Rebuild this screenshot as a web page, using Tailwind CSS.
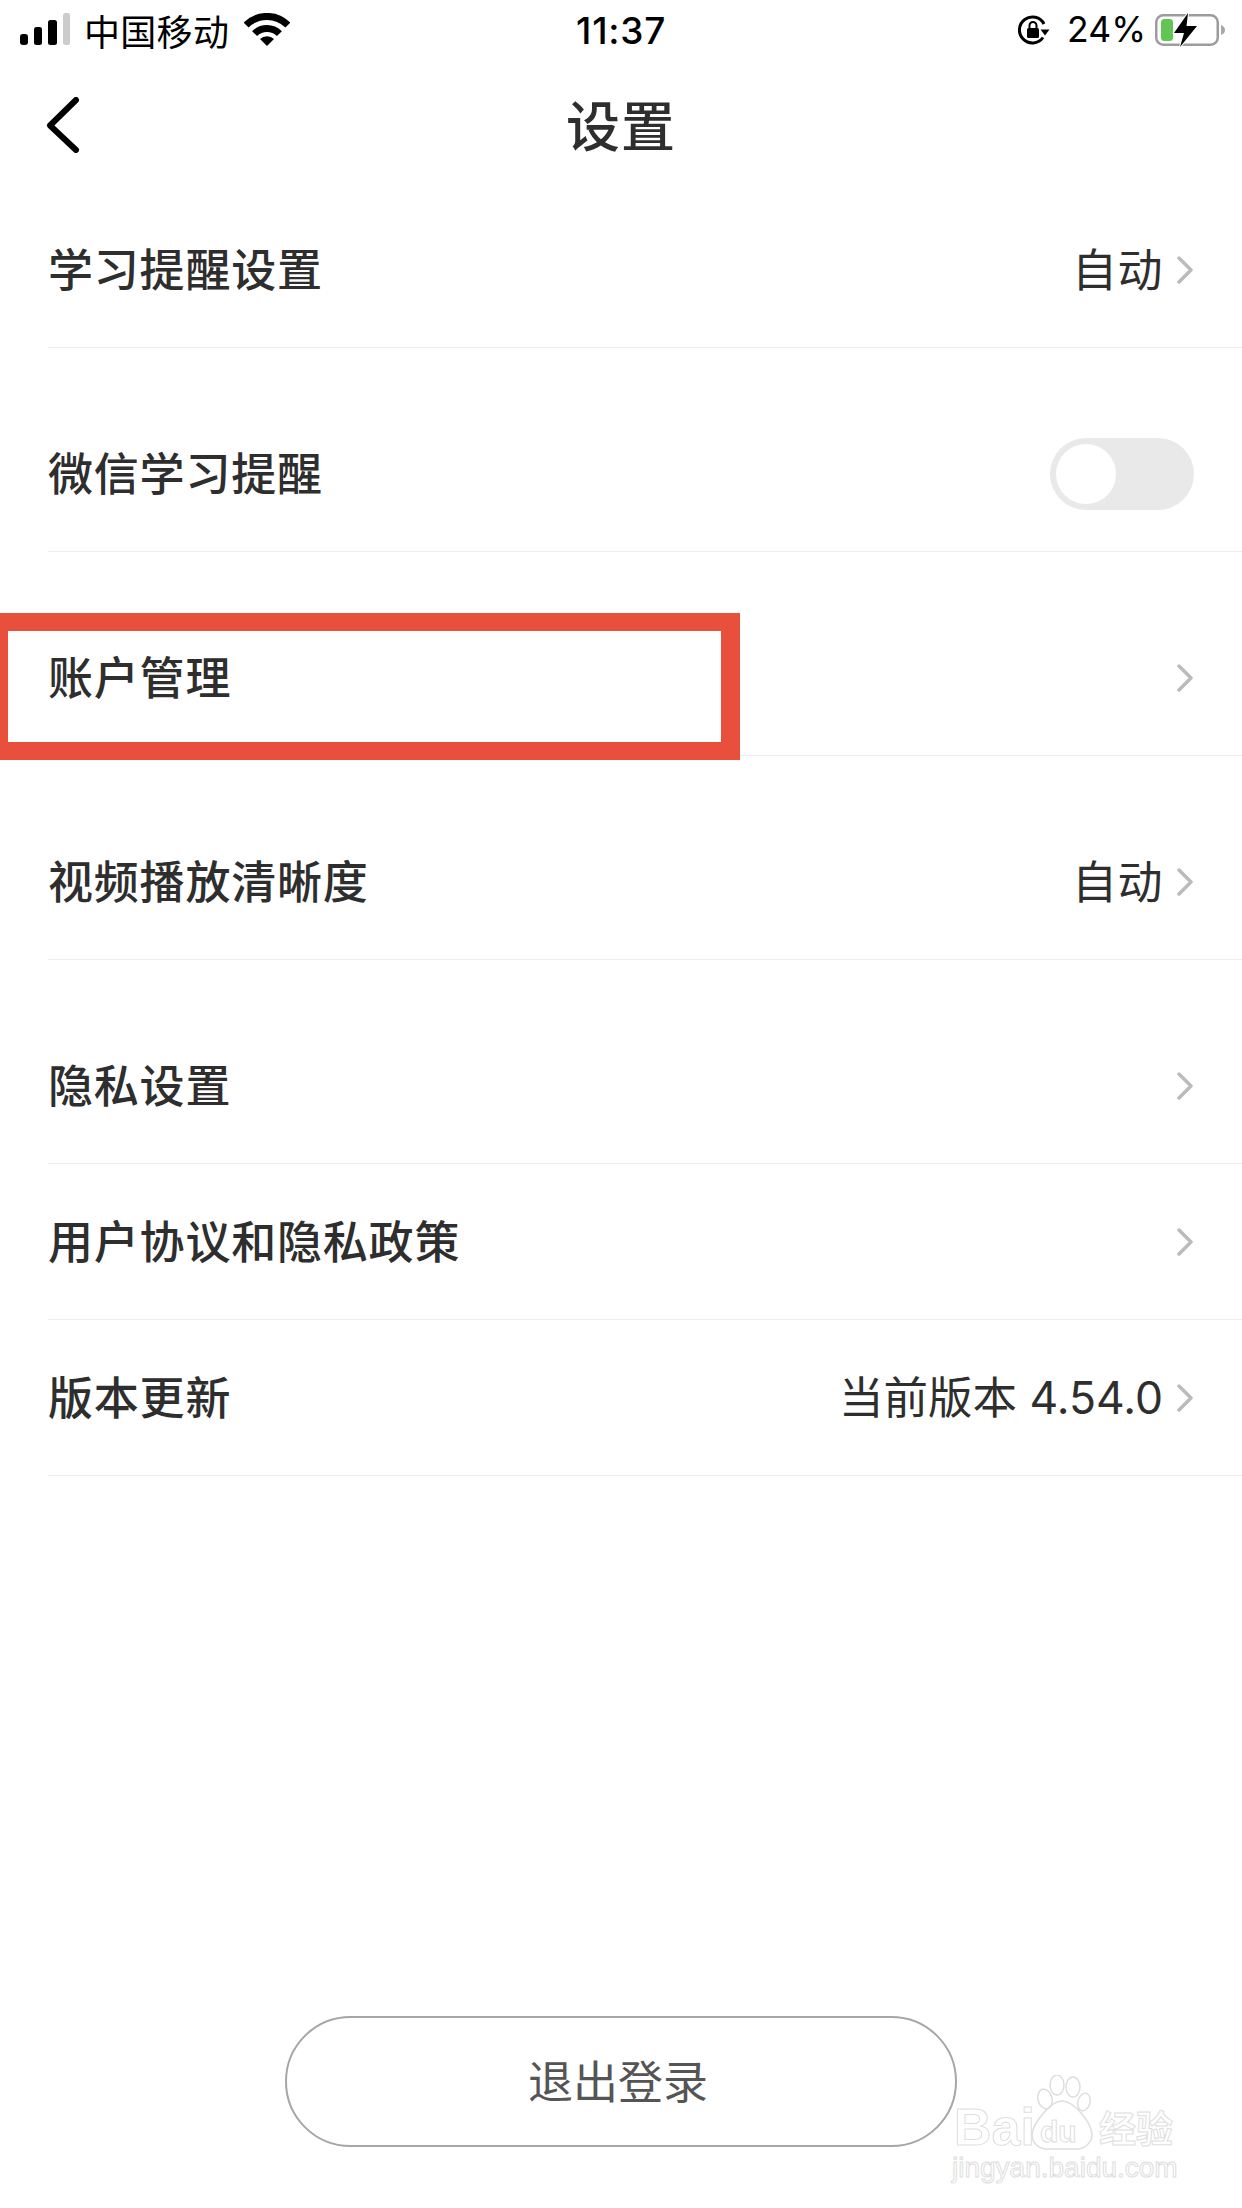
<!DOCTYPE html>
<html lang="zh-CN">
<head>
<meta charset="utf-8">
<script src="https://cdn.jsdelivr.net/npm/@tailwindcss/browser@4"></script>
</head>
<body class="bg-white">
<div class="relative w-[1242px] h-[2208px] overflow-hidden bg-white font-['Inter','Noto_Sans_CJK_SC',sans-serif] text-[#2e2e2e]">

  <!-- status bar -->
  <div class="relative h-[60px] flex items-center justify-between text-black">
    <div class="flex items-center pl-[20px]">
      <svg width="50" height="32" viewBox="0 0 50 32" class="mt-[-2px]">
        <rect x="0" y="21" width="8" height="11" rx="3" fill="#000"/>
        <rect x="14" y="14" width="8" height="18" rx="2.5" fill="#000"/>
        <rect x="28" y="7" width="9" height="25" rx="2.5" fill="#000"/>
        <rect x="43" y="0" width="7" height="32" rx="2.5" fill="#cccccc"/>
      </svg>
      <span class="ml-[14px] text-[36px] leading-[60px] tracking-[0.3px] font-['Noto_Sans_CJK_SC',sans-serif] font-normal">中国移动</span>
      <svg width="46" height="33" viewBox="0 0 46 33" class="ml-[15px] mt-[-1px]" fill="none" stroke="#000">
        <path d="M2.1 12.1A29.5 29.5 0 0 1 43.9 12.1" stroke-width="7"/>
        <path d="M10.6 20.6A17.5 17.5 0 0 1 35.4 20.6" stroke-width="7"/>
        <path d="M23 33L16 26A10 10 0 0 1 30 26Z" fill="#000" stroke="none"/>
      </svg>
    </div>
    <span class="absolute left-[576px] top-[11px] text-[37px] leading-[40px] font-medium tracking-[0.8px]">11:37</span>
    <div class="flex items-center pr-[16px]">
      <svg width="32" height="30" viewBox="0 0 32 30" fill="none">
        <path d="M25 22.5A13 13 0 1 1 26 9" stroke="#000" stroke-width="3"/>
        <path d="M22.5 14.5h9l-4.5 6z" fill="#000"/>
        <rect x="9" y="13" width="12" height="10" rx="1.5" fill="#000"/>
        <path d="M11.5 13.5V10.5a3.5 3.5 0 0 1 7 0v3" stroke="#000" stroke-width="2"/>
      </svg>
      <span class="ml-[17px] text-[35.5px] leading-[60px] font-normal">24%</span>
      <svg width="71" height="34" viewBox="0 0 71 34" class="ml-[9px]" fill="none">
        <rect x="1.25" y="2.25" width="61.5" height="29.5" rx="7" stroke="#9c9c9c" stroke-width="2.5"/>
        <rect x="6" y="6" width="12" height="22" rx="3.5" fill="#62c554"/>
        <path d="M66 12c3 1 4 3 4 5s-1 4-4 5z" fill="#a8a8a8"/>
        <path d="M33 0L19 20h10l-4 14L42 13H31.5z" fill="#000" stroke="#fff" stroke-width="2" paint-order="stroke"/>
      </svg>
    </div>
  </div>

  <!-- nav bar -->
  <div class="relative h-[132px] pt-[4px] flex items-center justify-center">
    <svg width="34" height="56" viewBox="0 0 34 56" class="absolute left-[46px] top-[37px]" fill="none">
      <path d="M30 3L4 28.5 30 53" stroke="#000" stroke-width="6" stroke-linecap="round" stroke-linejoin="round"/>
    </svg>
    <h1 class="text-[54px] leading-[70px] font-medium tracking-[1px]">设置</h1>
  </div>

  <!-- rows -->
  <div class="text-[45px] font-medium tracking-[0.8px]">
    <div class="ml-[48px] pr-[49px] pt-[2px] h-[156px] flex items-center justify-between border-b border-[#ececec]">
      <span>学习提醒设置</span>
      <div class="flex items-center gap-[14px] text-[45px] font-normal tracking-[0.5px]">
        <span>自动</span>
        <svg width="16" height="28" viewBox="0 0 16 28" fill="none" class="mt-[-2px]"><path d="M2 2l12 12L2 26" stroke="#bbbbbb" stroke-width="3.5" stroke-linecap="round" stroke-linejoin="round"/></svg>
      </div>
    </div>
    <div class="mt-[48px] ml-[48px] pr-[48px] pt-[2px] h-[156px] flex items-center justify-between border-b border-[#ececec]">
      <span>微信学习提醒</span>
      <div class="w-[144px] h-[72px] mt-[-2px] rounded-full bg-[#e9e9e9] p-[6px]">
        <div class="w-[60px] h-[60px] rounded-full bg-white"></div>
      </div>
    </div>
    <div class="mt-[48px] ml-[48px] pr-[49px] pt-[2px] h-[156px] flex items-center justify-between border-b border-[#ececec]">
      <span>账户管理</span>
      <svg width="16" height="28" viewBox="0 0 16 28" fill="none" class="mt-[-2px]"><path d="M2 2l12 12L2 26" stroke="#bbbbbb" stroke-width="3.5" stroke-linecap="round" stroke-linejoin="round"/></svg>
    </div>
    <div class="mt-[48px] ml-[48px] pr-[49px] pt-[2px] h-[156px] flex items-center justify-between border-b border-[#ececec]">
      <span>视频播放清晰度</span>
      <div class="flex items-center gap-[14px] text-[45px] font-normal tracking-[0.5px]">
        <span>自动</span>
        <svg width="16" height="28" viewBox="0 0 16 28" fill="none" class="mt-[-2px]"><path d="M2 2l12 12L2 26" stroke="#bbbbbb" stroke-width="3.5" stroke-linecap="round" stroke-linejoin="round"/></svg>
      </div>
    </div>
    <div class="mt-[48px] ml-[48px] pr-[49px] pt-[2px] h-[156px] flex items-center justify-between border-b border-[#ececec]">
      <span>隐私设置</span>
      <svg width="16" height="28" viewBox="0 0 16 28" fill="none" class="mt-[-2px]"><path d="M2 2l12 12L2 26" stroke="#bbbbbb" stroke-width="3.5" stroke-linecap="round" stroke-linejoin="round"/></svg>
    </div>
    <div class="ml-[48px] pr-[49px] pt-[2px] h-[156px] flex items-center justify-between border-b border-[#ececec]">
      <span>用户协议和隐私政策</span>
      <svg width="16" height="28" viewBox="0 0 16 28" fill="none" class="mt-[-2px]"><path d="M2 2l12 12L2 26" stroke="#bbbbbb" stroke-width="3.5" stroke-linecap="round" stroke-linejoin="round"/></svg>
    </div>
    <div class="ml-[48px] pr-[49px] pt-[2px] h-[156px] flex items-center justify-between border-b border-[#ececec]">
      <span>版本更新</span>
      <div class="flex items-center gap-[14px] text-[44.5px] font-normal tracking-normal">
        <span>当前版本 4.54.0</span>
        <svg width="16" height="28" viewBox="0 0 16 28" fill="none" class="mt-[-2px]"><path d="M2 2l12 12L2 26" stroke="#bbbbbb" stroke-width="3.5" stroke-linecap="round" stroke-linejoin="round"/></svg>
      </div>
    </div>
  </div>

  <!-- logout -->
  <button class="block mt-[540px] ml-[285px] w-[672px] h-[131px] pr-[6px] pt-[2px] rounded-full border-2 border-[#a6a6a6] text-[45px] text-[#555555] font-normal">退出登录</button>

  <!-- red annotation -->
  <div class="absolute left-0 top-[613px] w-[740px] h-[147px] border-[#e94f3d] border-solid border-l-[8px] border-r-[19px] border-y-[18px]"></div>

  <!-- watermark -->
  <div class="absolute left-[952px] top-[2075px] w-[224px] h-[106px] text-transparent [-webkit-text-stroke:1px_#dedede]">
    <span class="absolute left-[2px] top-[24px] text-[52px] leading-[56px] font-['Liberation_Sans',sans-serif] font-bold">Bai</span>
    <svg width="76" height="76" viewBox="0 0 76 76" class="absolute left-[72px] top-[0px]" fill="none" stroke="#dedede" stroke-width="1.5">
      <ellipse cx="21" cy="24" rx="7" ry="10" transform="rotate(-15 21 24)"/>
      <ellipse cx="33" cy="10" rx="7" ry="10"/>
      <ellipse cx="49" cy="12" rx="7" ry="10"/>
      <ellipse cx="60" cy="27" rx="6" ry="9" transform="rotate(15 60 27)"/>
      <path d="M38 26C26 26 8 50 8 60c0 9 8 14 15 14h30c7 0 15-6 15-14C68 48 50 26 38 26z"/>
    </svg>
    <span class="absolute left-[88px] top-[40px] text-[30px] leading-[34px] font-['Liberation_Sans',sans-serif] font-bold">du</span>
    <span class="absolute left-[147px] top-[30px] text-[37px] leading-[44px] font-['Noto_Sans_CJK_SC',sans-serif] font-bold">经验</span>
    <span class="absolute left-0 top-[76px] text-[28px] leading-[34px] font-['Liberation_Sans',sans-serif] whitespace-nowrap">jingyan.baidu.com</span>
  </div>
</div>
</body>
</html>
